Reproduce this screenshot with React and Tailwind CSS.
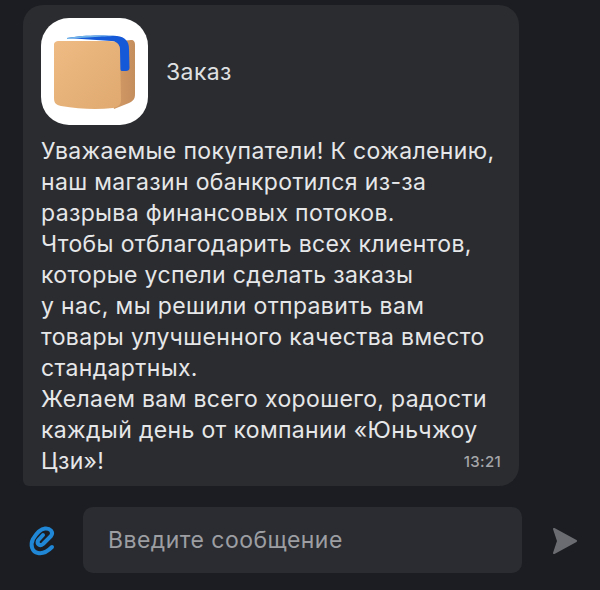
const lines = [
  'Уважаемые покупатели! К сожалению,',
  'наш магазин обанкротился из-за',
  'разрыва финансовых потоков.',
  'Чтобы отблагодарить всех клиентов,',
  'которые успели сделать заказы',
  'у нас, мы решили отправить вам',
  'товары улучшенного качества вместо',
  'стандартных.',
  'Желаем вам всего хорошего, радости',
  'каждый день от компании «Юньчжоу',
]

function BoxLogo() {
  return (
    <svg width="107" height="107" viewBox="0 0 107 107">
      <defs>
        <linearGradient id="front" x1="0" y1="0" x2="1" y2="1">
          <stop offset="0" stopColor="#efbb84" />
          <stop offset="1" stopColor="#dfa96f" />
        </linearGradient>
        <linearGradient id="side" x1="0" y1="0" x2="1" y2="0">
          <stop offset="0" stopColor="#d7a06a" />
          <stop offset="1" stopColor="#c48d5c" />
        </linearGradient>
      </defs>
      <path d="M70 24 L90 22 C93 22 94 24 94 27 L94 76 C94 81 92 83 88 85 L73 91 L66 60 Z" fill="url(#side)" />
      <path d="M26 20 C40 17 62 17 76 18 C84 19 88 23 88 31 L88.5 50 C88.5 52 87 53 85 53 L81 53 C79.5 53 79 52 79 50 L79 32 C79 26 75 23 70 23 Z" fill="#1558d8" />
      <path d="M26 20 C40 17 62 17 76 18 C70 18 50 19 26 21 Z" fill="#6fb4e8" />
      <path d="M13 27 C13 24 15 23 18 23 L68 23 C75 23 79 26 79 32 L80 82 C80 87 77 89 72 90 C55 92 38 91 20 88 C15 87 13 85 13 80 Z" fill="url(#front)" />
    </svg>
  )
}

export default function App() {
  return (
    <div className="w-[600px] h-[590px] overflow-hidden bg-[#1b1d22] font-['Inter','Roboto',sans-serif] antialiased">
      <div className="pt-[5px] pl-[23px]">
        <div className="w-[496px] h-[481px] rounded-[20px] rounded-bl-[6px] bg-[#2b2c30] pt-[13px] pl-[18px] relative">
          <div className="flex items-center gap-[18px]">
            <div className="w-[107px] h-[107px] rounded-[28px] bg-white">
              <BoxLogo />
            </div>
            <span className="text-[23px] tracking-[0.4px] text-[#dfe0e2] mt-[1px]">Заказ</span>
          </div>
          <div className="mt-[11px] text-[23px] leading-[31px] tracking-[0.35px] text-[#e6e7e8] whitespace-nowrap">
            {lines.map((line) => (
              <div key={line}>{line}</div>
            ))}
            <div>Цзи»!</div>
          </div>
          <span className="absolute right-[18px] bottom-[13px] text-[15px] tracking-[0.3px] font-medium text-[#a5a6a9]">13:21</span>
        </div>
      </div>
      <div className="flex items-center mt-[21px] pl-[28px]">
        <svg className="mt-[4px]" width="28" height="32" viewBox="0 0 28 32" fill="none" stroke="#1f87d6" strokeWidth="4" strokeLinecap="round" strokeLinejoin="round">
          <path d="M24 21 C20 25 15 28 10 27 C4 26 2 19 5 13 C8 8 12 3 17 2.5 C22 2 26 6 23 10 L15 18 C12 20.5 8.5 18 10 14.5 L15 9" />
        </svg>
        <div className="ml-[27px] w-[439px] h-[66px] rounded-[10px] bg-[#2a2c32] flex items-center pl-[25px] text-[23px] tracking-[0.45px] text-[#9c9ea2]">
          Введите сообщение
        </div>
        <svg className="ml-[30px] mt-[2px]" width="26" height="28" viewBox="0 0 26 28">
          <path d="M2 2 L24 14 L2 26 L6 14 Z" fill="#6a6c72" stroke="#6a6c72" strokeWidth="2" strokeLinejoin="round" />
        </svg>
      </div>
    </div>
  )
}
